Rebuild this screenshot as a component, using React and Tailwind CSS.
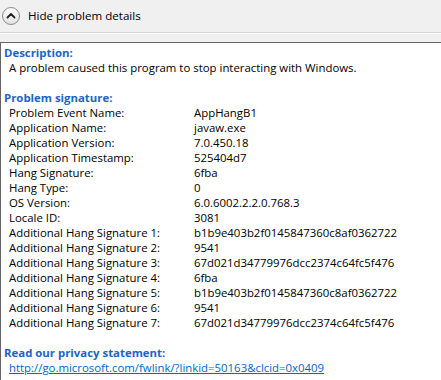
import React from 'react';

const rows = [
  ['Problem Event Name:', 'AppHangB1'],
  ['Application Name:', 'javaw.exe'],
  ['Application Version:', '7.0.450.18'],
  ['Application Timestamp:', '525404d7'],
  ['Hang Signature:', '6fba'],
  ['Hang Type:', '0'],
  ['OS Version:', '6.0.6002.2.2.0.768.3'],
  ['Locale ID:', '3081'],
  ['Additional Hang Signature 1:', 'b1b9e403b2f0145847360c8af0362722'],
  ['Additional Hang Signature 2:', '9541'],
  ['Additional Hang Signature 3:', '67d021d34779976dcc2374c64fc5f476'],
  ['Additional Hang Signature 4:', '6fba'],
  ['Additional Hang Signature 5:', 'b1b9e403b2f0145847360c8af0362722'],
  ['Additional Hang Signature 6:', '9541'],
  ['Additional Hang Signature 7:', '67d021d34779976dcc2374c64fc5f476'],
];

const ChevronButton = () => (
  <svg width="20" height="20" viewBox="0 0 20 20">
    <defs>
      <linearGradient id="btnGrad" x1="0" y1="0" x2="0" y2="1">
        <stop offset="0%" stopColor="#fdfdfd" />
        <stop offset="100%" stopColor="#e2e2e2" />
      </linearGradient>
    </defs>
    <circle cx="10" cy="10" r="8.5" fill="url(#btnGrad)" stroke="#8a8a8a" strokeWidth="1" />
    <path d="M6.5 11.5 L10 8 L13.5 11.5" fill="none" stroke="#222" strokeWidth="1.8" strokeLinecap="round" strokeLinejoin="round" />
  </svg>
);

export default function App() {
  return (
    <div className="w-[441px] h-[380px] bg-[#f0f0f0] overflow-hidden text-[11.4px] text-black" style={{ fontFamily: '"Open Sans", "Noto Sans", sans-serif' }}>
      <div className="h-[32px] flex items-center pl-[1px] gap-[7px]">
        <ChevronButton />
        <span className="text-[11.6px] leading-none">Hide problem details</span>
      </div>
      <div className="h-[1px] bg-[#d5d5d5]"></div>
      <div className="h-[1px] bg-white"></div>
      <div className="h-[8px]"></div>
      <div className="h-[400px] bg-white border-t border-l border-[#646464] pt-[2px] leading-[15px]">
        <div className="pl-[3px] font-bold text-[#1c64c4]">Description:</div>
        <div className="pl-[8px]">A problem caused this program to stop interacting with Windows.</div>
        <div className="h-[15px]"></div>
        <div className="pl-[3px] font-bold text-[#1c64c4]">Problem signature:</div>
        {rows.map(([label, value]) => (
          <div key={label} className="flex pl-[8px]">
            <span className="w-[185px] shrink-0">{label}</span>
            <span>{value}</span>
          </div>
        ))}
        <div className="h-[15px]"></div>
        <div className="pl-[3px] font-bold text-[#1c64c4]">Read our privacy statement:</div>
        <div className="pl-[8px]">
          <a className="text-[#0066cc] underline">http://go.microsoft.com/fwlink/?linkid=50163&amp;clcid=0x0409</a>
        </div>
      </div>
    </div>
  );
}
